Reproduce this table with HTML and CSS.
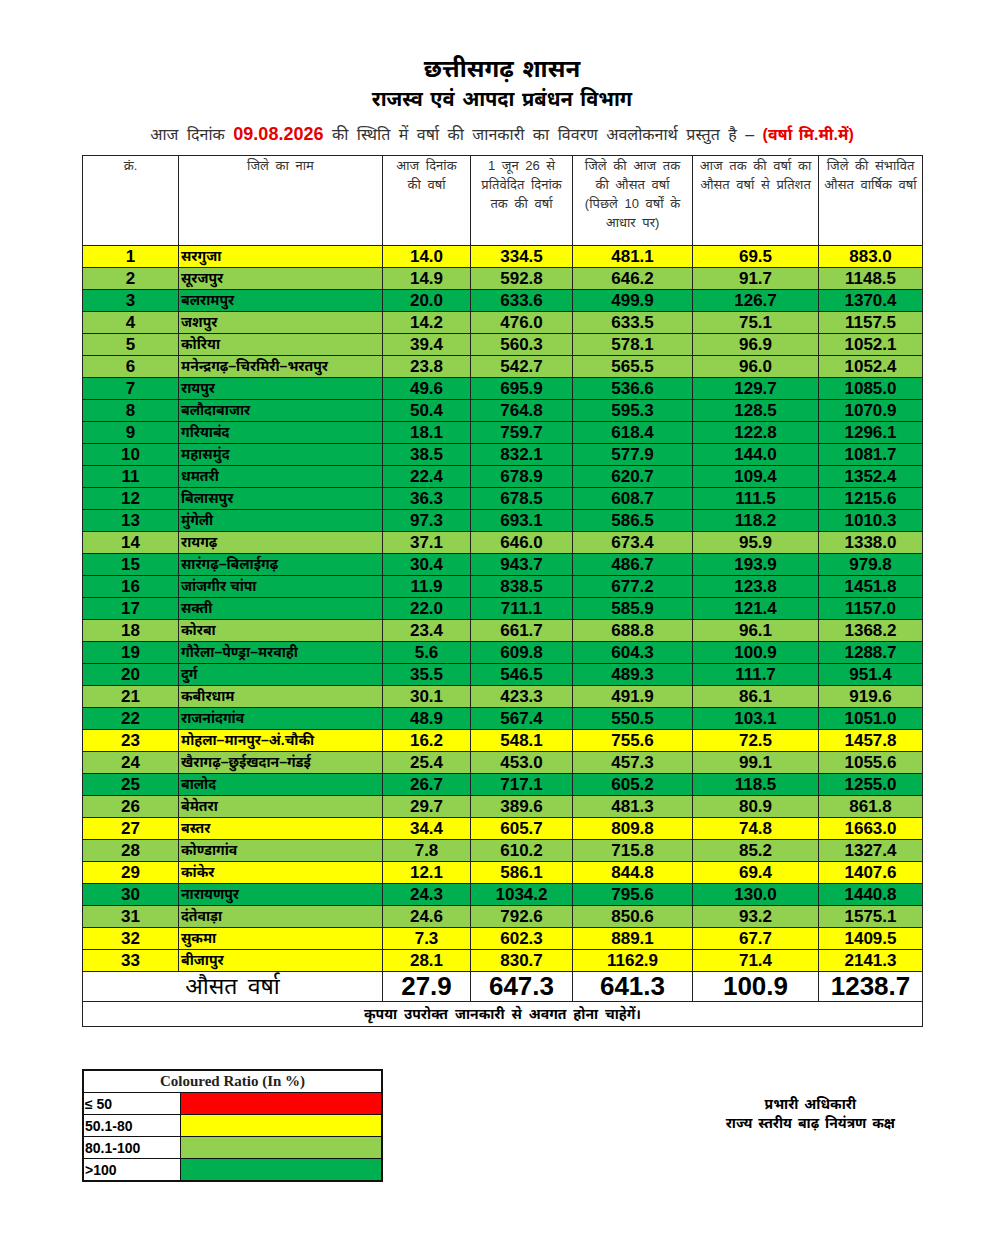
FILE: index.html
```html
<!DOCTYPE html>
<html lang="hi">

<head>
    <meta charset="UTF-8">
    <meta name="viewport" content="width=device-width, initial-scale=1.0">
    <title>वर्षा की जानकारी</title>
    <link rel="stylesheet" href="styles.css">
</head>

<body>
    <div class="page">
        <h1>छत्तीसगढ़ शासन</h1>
        <h2>राजस्व एवं आपदा प्रबंधन विभाग</h2>
        <p class="intro">आज दिनांक <span class="date">09.08.2026</span> की स्थिति में वर्षा की जानकारी का विवरण अवलोकनार्थ प्रस्तुत है – <span class="unit">(वर्षा मि.मी.में)</span></p>

        <table class="rain">
            <colgroup>
                <col style="width:96px">
                <col style="width:204px">
                <col style="width:88px">
                <col style="width:102px">
                <col style="width:120px">
                <col style="width:126px">
                <col style="width:104px">
            </colgroup>
            <thead>
                <tr>
                    <th>क्रं.</th>
                    <th>जिले का नाम</th>
                    <th>आज दिनांक<br>की वर्षा</th>
                    <th>1 जून 26 से<br>प्रतिवेदित दिनांक<br>तक की वर्षा</th>
                    <th>जिले की आज तक<br>की औसत वर्षा<br>(पिछले 10 वर्षों के<br>आधार पर)</th>
                    <th>आज तक की वर्षा का<br>औसत वर्षा से प्रतिशत</th>
                    <th>जिले की संभावित<br>औसत वार्षिक वर्षा</th>
                </tr>
            </thead>
            <tbody>
                <tr class="yellow"><td>1</td><td class="name">सरगुजा</td><td>14.0</td><td>334.5</td><td>481.1</td><td>69.5</td><td>883.0</td></tr>
                <tr class="light"><td>2</td><td class="name">सूरजपुर</td><td>14.9</td><td>592.8</td><td>646.2</td><td>91.7</td><td>1148.5</td></tr>
                <tr class="dark"><td>3</td><td class="name">बलरामपुर</td><td>20.0</td><td>633.6</td><td>499.9</td><td>126.7</td><td>1370.4</td></tr>
                <tr class="light"><td>4</td><td class="name">जशपुर</td><td>14.2</td><td>476.0</td><td>633.5</td><td>75.1</td><td>1157.5</td></tr>
                <tr class="light"><td>5</td><td class="name">कोरिया</td><td>39.4</td><td>560.3</td><td>578.1</td><td>96.9</td><td>1052.1</td></tr>
                <tr class="light"><td>6</td><td class="name">मनेन्द्रगढ़–चिरमिरी–भरतपुर</td><td>23.8</td><td>542.7</td><td>565.5</td><td>96.0</td><td>1052.4</td></tr>
                <tr class="dark"><td>7</td><td class="name">रायपुर</td><td>49.6</td><td>695.9</td><td>536.6</td><td>129.7</td><td>1085.0</td></tr>
                <tr class="dark"><td>8</td><td class="name">बलौदाबाजार</td><td>50.4</td><td>764.8</td><td>595.3</td><td>128.5</td><td>1070.9</td></tr>
                <tr class="dark"><td>9</td><td class="name">गरियाबंद</td><td>18.1</td><td>759.7</td><td>618.4</td><td>122.8</td><td>1296.1</td></tr>
                <tr class="dark"><td>10</td><td class="name">महासमुंद</td><td>38.5</td><td>832.1</td><td>577.9</td><td>144.0</td><td>1081.7</td></tr>
                <tr class="dark"><td>11</td><td class="name">धमतरी</td><td>22.4</td><td>678.9</td><td>620.7</td><td>109.4</td><td>1352.4</td></tr>
                <tr class="dark"><td>12</td><td class="name">बिलासपुर</td><td>36.3</td><td>678.5</td><td>608.7</td><td>111.5</td><td>1215.6</td></tr>
                <tr class="dark"><td>13</td><td class="name">मुंगेली</td><td>97.3</td><td>693.1</td><td>586.5</td><td>118.2</td><td>1010.3</td></tr>
                <tr class="light"><td>14</td><td class="name">रायगढ़</td><td>37.1</td><td>646.0</td><td>673.4</td><td>95.9</td><td>1338.0</td></tr>
                <tr class="dark"><td>15</td><td class="name">सारंगढ़–बिलाईगढ़</td><td>30.4</td><td>943.7</td><td>486.7</td><td>193.9</td><td>979.8</td></tr>
                <tr class="dark"><td>16</td><td class="name">जांजगीर चांपा</td><td>11.9</td><td>838.5</td><td>677.2</td><td>123.8</td><td>1451.8</td></tr>
                <tr class="dark"><td>17</td><td class="name">सक्ती</td><td>22.0</td><td>711.1</td><td>585.9</td><td>121.4</td><td>1157.0</td></tr>
                <tr class="light"><td>18</td><td class="name">कोरबा</td><td>23.4</td><td>661.7</td><td>688.8</td><td>96.1</td><td>1368.2</td></tr>
                <tr class="dark"><td>19</td><td class="name">गौरेला–पेण्ड्रा–मरवाही</td><td>5.6</td><td>609.8</td><td>604.3</td><td>100.9</td><td>1288.7</td></tr>
                <tr class="dark"><td>20</td><td class="name">दुर्ग</td><td>35.5</td><td>546.5</td><td>489.3</td><td>111.7</td><td>951.4</td></tr>
                <tr class="light"><td>21</td><td class="name">कबीरधाम</td><td>30.1</td><td>423.3</td><td>491.9</td><td>86.1</td><td>919.6</td></tr>
                <tr class="dark"><td>22</td><td class="name">राजनांदगांव</td><td>48.9</td><td>567.4</td><td>550.5</td><td>103.1</td><td>1051.0</td></tr>
                <tr class="yellow"><td>23</td><td class="name">मोहला–मानपुर–अं.चौकी</td><td>16.2</td><td>548.1</td><td>755.6</td><td>72.5</td><td>1457.8</td></tr>
                <tr class="light"><td>24</td><td class="name">खैरागढ़–छुईखदान–गंडई</td><td>25.4</td><td>453.0</td><td>457.3</td><td>99.1</td><td>1055.6</td></tr>
                <tr class="dark"><td>25</td><td class="name">बालोद</td><td>26.7</td><td>717.1</td><td>605.2</td><td>118.5</td><td>1255.0</td></tr>
                <tr class="light"><td>26</td><td class="name">बेमेतरा</td><td>29.7</td><td>389.6</td><td>481.3</td><td>80.9</td><td>861.8</td></tr>
                <tr class="yellow"><td>27</td><td class="name">बस्तर</td><td>34.4</td><td>605.7</td><td>809.8</td><td>74.8</td><td>1663.0</td></tr>
                <tr class="light"><td>28</td><td class="name">कोण्डागांव</td><td>7.8</td><td>610.2</td><td>715.8</td><td>85.2</td><td>1327.4</td></tr>
                <tr class="yellow"><td>29</td><td class="name">कांकेर</td><td>12.1</td><td>586.1</td><td>844.8</td><td>69.4</td><td>1407.6</td></tr>
                <tr class="dark"><td>30</td><td class="name">नारायणपुर</td><td>24.3</td><td>1034.2</td><td>795.6</td><td>130.0</td><td>1440.8</td></tr>
                <tr class="light"><td>31</td><td class="name">दंतेवाड़ा</td><td>24.6</td><td>792.6</td><td>850.6</td><td>93.2</td><td>1575.1</td></tr>
                <tr class="yellow"><td>32</td><td class="name">सुकमा</td><td>7.3</td><td>602.3</td><td>889.1</td><td>67.7</td><td>1409.5</td></tr>
                <tr class="yellow"><td>33</td><td class="name">बीजापुर</td><td>28.1</td><td>830.7</td><td>1162.9</td><td>71.4</td><td>2141.3</td></tr>
                <tr class="total">
                    <td colspan="2" class="total-label">औसत वर्षा</td>
                    <td>27.9</td><td>647.3</td><td>641.3</td><td>100.9</td><td>1238.7</td>
                </tr>
                <tr class="note">
                    <td colspan="7">कृपया उपरोक्त जानकारी से अवगत होना चाहेगें।</td>
                </tr>
            </tbody>
        </table>

        <div class="footer">
            <!-- रंग संकेत तालिका -->
            <table class="legend">
                <tr><th colspan="2">Coloured Ratio (In %)</th></tr>
                <tr><td>≤ 50</td><td class="sw red"></td></tr>
                <tr><td>50.1-80</td><td class="sw yellow"></td></tr>
                <tr><td>80.1-100</td><td class="sw light"></td></tr>
                <tr><td>&gt;100</td><td class="sw dark"></td></tr>
            </table>
            <div class="sign">
                <div>प्रभारी अधिकारी</div>
                <div>राज्य स्तरीय बाढ़ नियंत्रण कक्ष</div>
            </div>
        </div>
    </div>
</body>

</html>
```

FILE: styles.css
```css
body {
    margin: 0;
    background: #fff;
    color: #000;
    font-family: "Liberation Sans", "Noto Sans", Arial, sans-serif;
}

.page {
    width: 840px;
    margin-left: 82px;
    padding-top: 54px;
}

h1 {
    margin: 0;
    text-align: center;
    font-size: 24px;
    line-height: 30px;
    font-weight: bold;
    word-spacing: 2px;
}

h2 {
    margin: 0;
    text-align: center;
    font-size: 20px;
    line-height: 30px;
    font-weight: bold;
    word-spacing: 2px;
}

.intro {
    margin: 8px 0 8px;
    text-align: center;
    font-size: 16px;
    line-height: 24px;
    color: #333;
    word-spacing: 4px;
}

.intro .date,
.intro .unit {
    color: #e60000;
    font-weight: bold;
    word-spacing: 2px;
}

.intro .date {
    font-size: 18px;
    word-spacing: 0;
}

.rain {
    width: 840px;
    border-collapse: collapse;
    table-layout: fixed;
}

.rain th,
.rain td {
    border: 1px solid #222;
    padding: 0;
}

.rain th {
    height: 89px;
    vertical-align: top;
    font-weight: normal;
    font-size: 13px;
    line-height: 19px;
    color: #333;
    padding: 0 2px;
    word-spacing: 3px;
    white-space: nowrap;
}

.rain td {
    height: 21px;
    text-align: center;
    font-weight: bold;
    font-size: 17px;
    line-height: 21px;
}

.rain td.name {
    text-align: left;
    font-size: 14px;
    padding-left: 2px;
    white-space: nowrap;
}

.yellow {
    background-color: #ffff00;
}

.light {
    background-color: #92d050;
}

.dark {
    background-color: #00b050;
}

.red {
    background-color: #ff0000;
}

.rain tr.total td {
    height: 29px;
    font-size: 26px;
    line-height: 29px;
    background: #fff;
}

.rain tr.total td.total-label {
    font-size: 23px;
    font-weight: normal;
    word-spacing: 4px;
}

.rain tr.note td {
    height: 24px;
    font-size: 14px;
    line-height: 24px;
    background: #fff;
    word-spacing: 3px;
}

.footer {
    display: flex;
    justify-content: space-between;
    align-items: flex-start;
    margin-top: 42px;
}

.legend {
    width: 301px;
    border-collapse: collapse;
    border: 2px solid #111;
}

.legend th,
.legend td {
    border: 1px solid #111;
    padding: 0;
    height: 21px;
}

.legend th {
    font-family: "Liberation Serif", "Times New Roman", serif;
    font-size: 15px;
    font-weight: bold;
    color: #222;
}

.legend td {
    width: 95px;
    font-size: 14px;
    font-weight: bold;
    padding-left: 1px;
}

.legend td.sw {
    width: auto;
}

.sign {
    margin-top: 26px;
    margin-right: 27px;
    text-align: center;
    font-size: 14px;
    font-weight: bold;
    line-height: 19px;
    word-spacing: 2px;
}
```
